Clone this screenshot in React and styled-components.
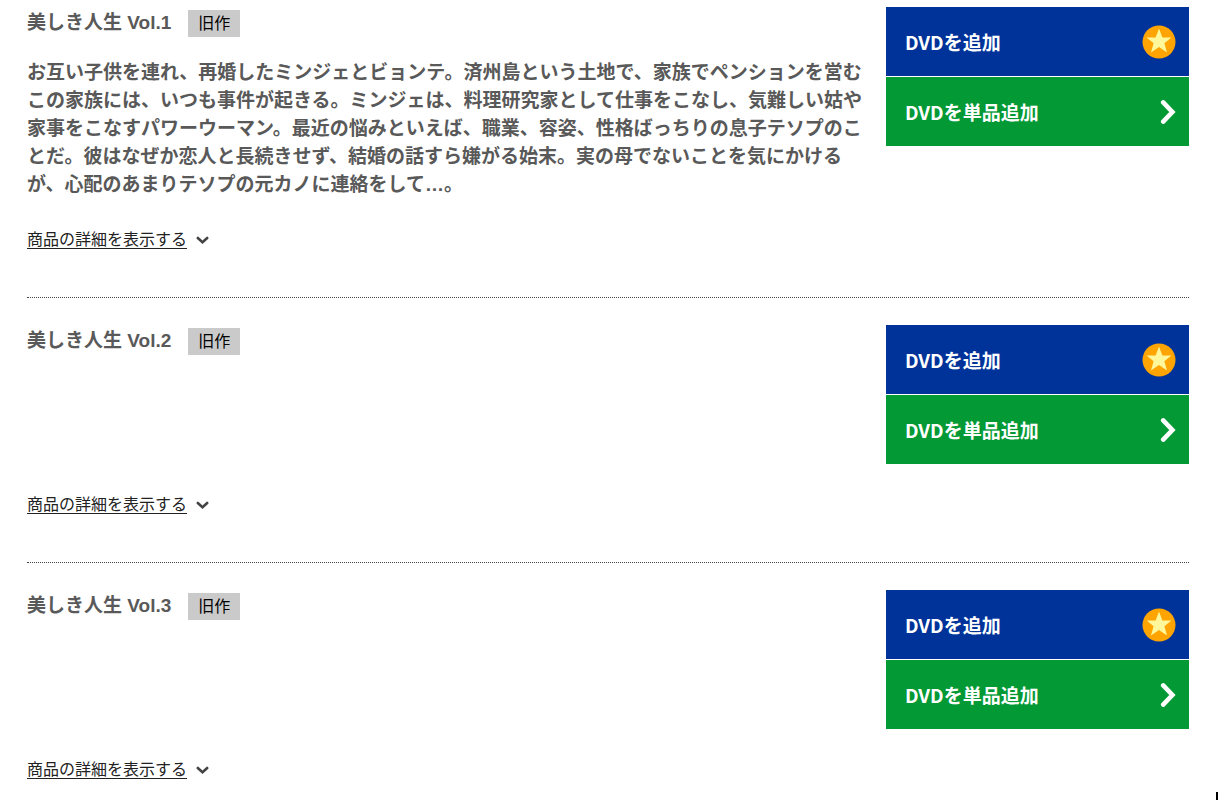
import React from "react";
import styled, { createGlobalStyle } from "styled-components";

const GlobalStyle = createGlobalStyle`
  * { box-sizing: border-box; }
  body {
    margin: 0;
    background: #fff;
    color: #595959;
    font-family: "Liberation Sans", "Noto Sans CJK JP", sans-serif;
  }
`;

const Page = styled.main`
  padding: 7px 29px 0 27px;
`;

const VolumeList = styled.ul`
  list-style: none;
  margin: 0;
  padding: 0;
`;

const Volume = styled.li`
  padding-bottom: 45px;

  & + & {
    border-top: 1px dotted #444;
    padding-top: 27px;
  }
`;

const Columns = styled.div`
  display: flex;
  align-items: flex-start;
  gap: 20px;
  margin-bottom: 29px;
`;

const Info = styled.div`
  flex: 1;
  min-width: 0;
`;

const Heading = styled.div`
  display: flex;
  align-items: flex-start;
  gap: 17px;
`;

const Title = styled.h2`
  margin: 0;
  font-size: 19px;
  line-height: 32px;
  font-weight: 700;
`;

const Badge = styled.span`
  margin-top: 3px;
  padding: 0 10px;
  background: #cacaca;
  color: #000;
  font-size: 16px;
  line-height: 27px;
`;

const Description = styled.p`
  margin: 20px 0 0;
  font-size: 19px;
  line-height: 28px;
  font-weight: 700;
`;

const Actions = styled.div`
  display: flex;
  flex: 0 0 303px;
  flex-direction: column;
  gap: 1px;
`;

const ActionButton = styled.button`
  display: flex;
  align-items: center;
  justify-content: space-between;
  height: 69px;
  padding: 0 13px 0 19px;
  border: 0;
  background: ${({ $single }) => ($single ? "#039934" : "#003399")};
  color: #fff;
  font-family: "Noto Sans CJK JP", sans-serif;
  font-size: 19px;
  font-weight: 700;
  line-height: 28px;
  text-align: left;
  cursor: pointer;
`;

const DetailLink = styled.a`
  display: inline-flex;
  align-items: center;
  gap: 9px;
  color: #222;
  font-size: 16px;
  line-height: 24px;
  text-decoration: none;
  vertical-align: top;
`;

const DetailLabel = styled.span`
  text-decoration: underline;
  text-decoration-thickness: 1px;
  text-underline-offset: 3px;
`;

const Caret = styled.span`
  position: fixed;
  right: 0;
  bottom: 0;
  width: 2px;
  height: 8px;
  background: #000;
`;

const StarIcon = () => (
  <svg width="34" height="34" viewBox="0 0 34 34" aria-hidden="true">
    <circle cx="17" cy="17" r="16.5" fill="#ffa400" />
    <path
      d="M17 3.5l3.4 9h9l-7 5.8 2.6 9.2-8-5.4-8 5.4 2.6-9.2-7-5.8h9z"
      fill="#fff799"
    />
  </svg>
);

const ChevronRight = () => (
  <svg width="16" height="26" viewBox="0 0 16 26" aria-hidden="true">
    <path
      d="M3.2 3.4l9.2 9.6-9.2 9.6"
      fill="none"
      stroke="#fff"
      strokeWidth="4.6"
      strokeLinecap="round"
    />
  </svg>
);

const ChevronDown = () => (
  <svg width="13" height="9" viewBox="0 0 13 9" aria-hidden="true">
    <path
      d="M1.8 2l4.7 4.2L11.2 2"
      fill="none"
      stroke="#444"
      strokeWidth="2.6"
      strokeLinecap="round"
    />
  </svg>
);

const volumes = [
  {
    number: 1,
    description:
      "お互い子供を連れ、再婚したミンジェとビョンテ。済州島という土地で、家族でペンションを営むこの家族には、いつも事件が起きる。ミンジェは、料理研究家として仕事をこなし、気難しい姑や家事をこなすパワーウーマン。最近の悩みといえば、職業、容姿、性格ばっちりの息子テソプのことだ。彼はなぜか恋人と長続きせず、結婚の話すら嫌がる始末。実の母でないことを気にかけるが、心配のあまりテソプの元カノに連絡をして…。",
  },
  { number: 2 },
  { number: 3 },
];

export default function App() {
  return (
    <>
      <GlobalStyle />
      <Page lang="ja">
        <VolumeList>
          {volumes.map(({ number, description }) => (
            <Volume key={number}>
              <Columns>
                <Info>
                  <Heading>
                    <Title>美しき人生 Vol.{number}</Title>
                    <Badge>旧作</Badge>
                  </Heading>
                  {description && <Description>{description}</Description>}
                </Info>
                <Actions>
                  <ActionButton type="button">
                    DVDを追加
                    <StarIcon />
                  </ActionButton>
                  <ActionButton type="button" $single>
                    DVDを単品追加
                    <ChevronRight />
                  </ActionButton>
                </Actions>
              </Columns>
              <DetailLink href="#">
                <DetailLabel>商品の詳細を表示する</DetailLabel>
                <ChevronDown />
              </DetailLink>
            </Volume>
          ))}
        </VolumeList>
      </Page>
      <Caret />
    </>
  );
}
